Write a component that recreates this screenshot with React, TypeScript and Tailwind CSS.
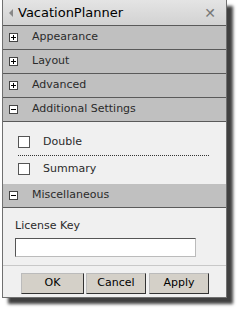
import React from "react";

const font = { fontFamily: '"DejaVu Sans", Verdana, sans-serif' };

const Header = ({ label, open }: { label: string; open?: boolean }) => (
  <div className="flex items-center h-[24px] bg-[#c0c0c0] border-b border-[#5a5a5a] text-[11px] text-[#2b2b2b]">
    <span className="ml-[6px] w-[9px] h-[9px] bg-white border border-[#444] flex items-center justify-center relative">
      <span className="absolute w-[5px] h-px bg-black" />
      {!open && <span className="absolute w-px h-[5px] bg-black" />}
    </span>
    <span className="ml-[14px]">{label}</span>
  </div>
);

const Check = ({ label }: { label: string }) => (
  <div className="flex items-center h-[20px] text-[11px] text-[#2b2b2b]">
    <span className="w-[12px] h-[12px] bg-white border border-[#555]" />
    <span className="ml-[13px]">{label}</span>
  </div>
);

const Btn = ({ label, w }: { label: string; w: string }) => (
  <button className={`${w} h-[21px] bg-[#d4d0c8] border border-[#bbb] border-r-[#333] border-b-[#333] text-[11px] text-black`}>
    {label}
  </button>
);

export default function App() {
  return (
    <div className="w-[241px] h-[311px] bg-white pl-[2px]" style={font}>
      <div className="w-[225px] h-[298px] bg-[#f0f0f0] border-x border-[#707070] border-b flex flex-col shadow-[6px_6px_3px_rgba(0,0,0,0.75)]">
        <div className="flex items-center h-[26px] bg-gradient-to-b from-[#e4e4e4] to-[#d2d2d2] border-b border-[#5a5a5a]">
          <span className="ml-[6px] w-0 h-0 border-y-[4px] border-y-transparent border-r-[4px] border-r-[#888]" />
          <span className="ml-[5px] text-[13px] text-black">VacationPlanner</span>
          <span className="ml-auto mr-[10px] text-[14px] font-bold text-[#777] leading-none">✕</span>
        </div>
        <Header label="Appearance" />
        <Header label="Layout" />
        <Header label="Advanced" />
        <Header label="Additional Settings" open />
        <div className="px-[15px] pt-[10px] pb-[5px]">
          <Check label="Double" />
          <div className="border-b border-dotted border-[#333] my-[3px] mr-[2px]" />
          <Check label="Summary" />
        </div>
        <Header label="Miscellaneous" open />
        <div className="px-[12px] pt-[10px] pb-[8px] border-b border-[#c8c8c8]">
          <div className="text-[11px] text-[#2b2b2b]">License Key</div>
          <div className="mt-[3px] w-[181px] h-[19px] bg-white border border-[#555] border-r-[#bbb] border-b-[#bbb]" />
        </div>
        <div className="flex pt-[7px] pl-[18px]">
          <Btn label="OK" w="w-[63px]" />
          <div className="w-[2px]" />
          <Btn label="Cancel" w="w-[60px]" />
          <div className="w-[3px]" />
          <Btn label="Apply" w="w-[60px]" />
        </div>
      </div>
    </div>
  );
}
